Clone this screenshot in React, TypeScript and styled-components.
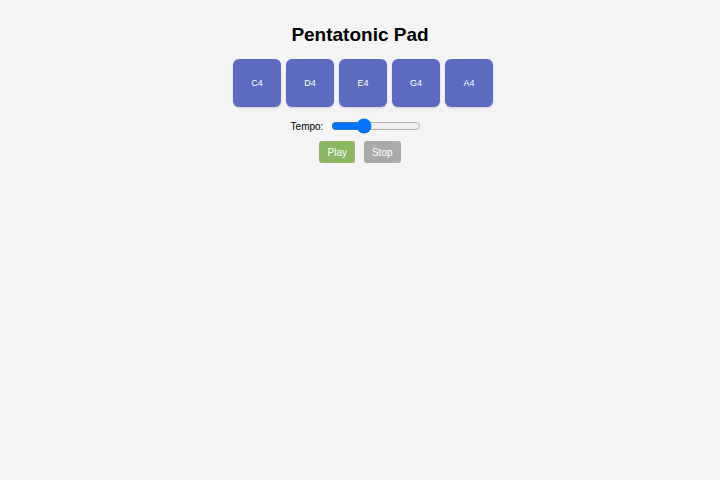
import React, { useState } from "react"
import styled, { createGlobalStyle } from "styled-components"

const GlobalStyle = createGlobalStyle`
  html, body {
    margin: 0;
    padding: 0;
    background: #f4f4f4;
    font-family: "Liberation Sans", Arial, sans-serif;
  }
`

const Page = styled.div`
  display: flex;
  flex-direction: column;
  align-items: center;
  padding-top: 23px;
`

const Title = styled.h1`
  margin: 0;
  font-size: 19px;
  font-weight: bold;
  color: #000;
  line-height: 24px;
`

const PadRow = styled.div`
  display: flex;
  gap: 5px;
  margin-top: 12px;
  margin-left: 6px;
`

const Pad = styled.button<{ $active: boolean }>`
  width: 48px;
  height: 48px;
  border: none;
  border-radius: 6px;
  background: ${({ $active }) => ($active ? "#7986cb" : "#5c6bc0")};
  color: #fff;
  font-family: inherit;
  font-size: 9px;
  box-shadow: 0 1px 2px rgba(0, 0, 0, 0.15);
  cursor: pointer;
  padding: 0;
`

const TempoRow = styled.div`
  display: flex;
  align-items: center;
  gap: 8px;
  margin-top: 13px;
  margin-left: -8px;
  font-size: 10px;
  color: #000;
`

const Slider = styled.input`
  width: 90px;
  height: 12px;
  margin: 0;
  accent-color: #0075ff;
`

const ButtonRow = styled.div`
  display: flex;
  gap: 9px;
  margin-top: 9px;
`

const ActionButton = styled.button<{ $color: string }>`
  height: 22px;
  padding: 0 8px;
  border: none;
  border-radius: 3px;
  background: ${({ $color }) => $color};
  color: #fff;
  font-family: inherit;
  font-size: 10px;
  cursor: pointer;
`

const notes = ["C4", "D4", "E4", "G4", "A4"]

export default function App() {
  const [active, setActive] = useState<string | null>(null)
  const [tempo, setTempo] = useState(120)

  return (
    <>
      <GlobalStyle />
      <Page>
        <Title>Pentatonic Pad</Title>
        <PadRow>
          {notes.map((note) => (
            <Pad
              key={note}
              $active={active === note}
              onMouseDown={() => setActive(note)}
              onMouseUp={() => setActive(null)}
            >
              {note}
            </Pad>
          ))}
        </PadRow>
        <TempoRow>
          <label htmlFor="tempo">Tempo:</label>
          <Slider
            id="tempo"
            type="range"
            min={60}
            max={240}
            value={tempo}
            onChange={(e) => setTempo(Number(e.target.value))}
          />
        </TempoRow>
        <ButtonRow>
          <ActionButton $color="#8bb662">Play</ActionButton>
          <ActionButton $color="#aaaaaa">Stop</ActionButton>
        </ButtonRow>
      </Page>
    </>
  )
}
